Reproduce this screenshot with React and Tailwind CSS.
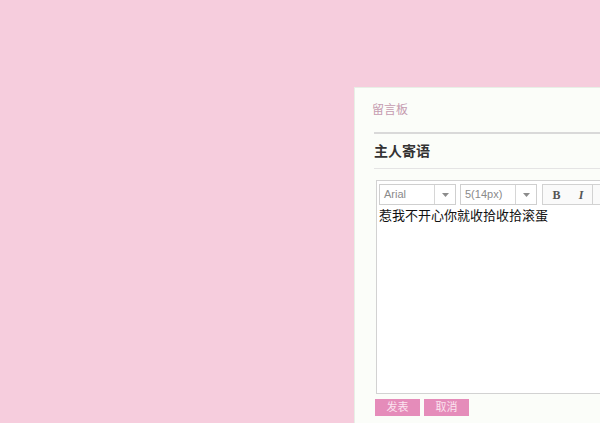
const font = { fontFamily: '"Liberation Sans", "Noto Sans CJK SC", sans-serif' };

const Select = ({ label, width }) => (
  <div className={`flex h-[21px] border border-[#cfcfcf] bg-white ${width}`}>
    <div className="flex-1 pl-[4px] text-[11px] leading-[19px] text-[#8a8a8a]">{label}</div>
    <div className="w-[21px] border-l border-[#d6d6d6] flex items-center justify-center">
      <svg width="7" height="4" viewBox="0 0 7 4">
        <path d="M0 0h7L3.5 4z" fill="#8c8c8c" />
      </svg>
    </div>
  </div>
);

export default function App() {
  return (
    <div className="w-[600px] h-[423px] bg-[#f6cddd] overflow-hidden flex pl-[354px] pt-[87px]" style={font}>
      <div className="w-[300px] shrink-0 bg-[#fbfdf9] border-l border-t border-[#e8efe6] pl-[19px] pt-[14px]">
        <div className="text-[12px] leading-[16px] text-[#c59bb0] -ml-[2px]">留言板</div>
        <div className="mt-[14px] border-t-2 border-[#d9d9d9]" />
        <div className="mt-[7px] text-[14px] leading-[20px] font-bold text-[#333]">主人寄语</div>
        <div className="mt-[7px] border-t border-[#e4e4e4]" />
        <div className="mt-[11px] ml-[2px] h-[214px] border border-[#d2d2d2] bg-white pl-[2px] pt-[3px]">
          <div className="flex items-center gap-[4px]">
            <Select label="Arial" width="w-[77px]" />
            <Select label="5(14px)" width="w-[77px]" />
            <div className="ml-[1px] flex h-[21px] border border-[#d2d2d2] bg-[#fafafa] items-center">
              <span className="w-[27px] text-center text-[12px] font-bold text-[#555]" style={{ fontFamily: '"Liberation Serif", serif' }}>B</span>
              <span className="w-[22px] text-center text-[12px] italic font-bold text-[#555]" style={{ fontFamily: '"Liberation Serif", serif' }}>I</span>
              <span className="h-[21px] border-l border-[#d2d2d2] w-[10px]" />
            </div>
          </div>
          <div className="mt-[2px] text-[13px] leading-[17px] text-[#111]">惹我不开心你就收拾收拾滚蛋</div>
        </div>
        <div className="mt-[5px] ml-[1px] flex gap-[4px]">
          <div className="w-[45px] h-[17px] bg-[#e58cba] text-[#fbe3ef] text-[11px] leading-[17px] text-center">发表</div>
          <div className="w-[45px] h-[17px] bg-[#e58cba] text-[#fbe3ef] text-[11px] leading-[17px] text-center">取消</div>
        </div>
      </div>
    </div>
  );
}
